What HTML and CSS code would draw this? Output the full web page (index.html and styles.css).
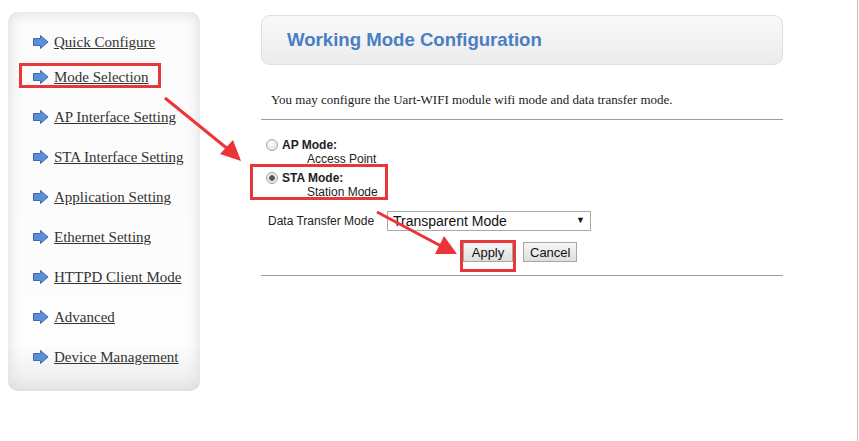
FILE: index.html
```html
<!DOCTYPE html>
<html lang="en">
<head>
    <meta charset="UTF-8">
    <title>Working Mode Configuration</title>
    <link rel="stylesheet" href="styles.css">
</head>
<body>

<div class="page">
    <div class="sidebar">
        <ul class="menu">
            <li><span class="ico"><svg width="16" height="14" viewBox="0 0 16 14"><polygon points="0.5,3.5 7.5,3.5 7.5,0.5 15,7 7.5,13.5 7.5,10.5 0.5,10.5" fill="#5b8edb" stroke="#3f68ad" stroke-width="1"/></svg></span><a href="#">Quick Configure</a></li>
            <li class="marked"><span class="ico"><svg width="16" height="14" viewBox="0 0 16 14"><polygon points="0.5,3.5 7.5,3.5 7.5,0.5 15,7 7.5,13.5 7.5,10.5 0.5,10.5" fill="#5b8edb" stroke="#3f68ad" stroke-width="1"/></svg></span><a href="#">Mode Selection</a></li>
            <li><span class="ico"><svg width="16" height="14" viewBox="0 0 16 14"><polygon points="0.5,3.5 7.5,3.5 7.5,0.5 15,7 7.5,13.5 7.5,10.5 0.5,10.5" fill="#5b8edb" stroke="#3f68ad" stroke-width="1"/></svg></span><a href="#">AP Interface Setting</a></li>
            <li><span class="ico"><svg width="16" height="14" viewBox="0 0 16 14"><polygon points="0.5,3.5 7.5,3.5 7.5,0.5 15,7 7.5,13.5 7.5,10.5 0.5,10.5" fill="#5b8edb" stroke="#3f68ad" stroke-width="1"/></svg></span><a href="#">STA Interface Setting</a></li>
            <li><span class="ico"><svg width="16" height="14" viewBox="0 0 16 14"><polygon points="0.5,3.5 7.5,3.5 7.5,0.5 15,7 7.5,13.5 7.5,10.5 0.5,10.5" fill="#5b8edb" stroke="#3f68ad" stroke-width="1"/></svg></span><a href="#">Application Setting</a></li>
            <li><span class="ico"><svg width="16" height="14" viewBox="0 0 16 14"><polygon points="0.5,3.5 7.5,3.5 7.5,0.5 15,7 7.5,13.5 7.5,10.5 0.5,10.5" fill="#5b8edb" stroke="#3f68ad" stroke-width="1"/></svg></span><a href="#">Ethernet Setting</a></li>
            <li><span class="ico"><svg width="16" height="14" viewBox="0 0 16 14"><polygon points="0.5,3.5 7.5,3.5 7.5,0.5 15,7 7.5,13.5 7.5,10.5 0.5,10.5" fill="#5b8edb" stroke="#3f68ad" stroke-width="1"/></svg></span><a href="#">HTTPD Client Mode</a></li>
            <li><span class="ico"><svg width="16" height="14" viewBox="0 0 16 14"><polygon points="0.5,3.5 7.5,3.5 7.5,0.5 15,7 7.5,13.5 7.5,10.5 0.5,10.5" fill="#5b8edb" stroke="#3f68ad" stroke-width="1"/></svg></span><a href="#">Advanced</a></li>
            <li><span class="ico"><svg width="16" height="14" viewBox="0 0 16 14"><polygon points="0.5,3.5 7.5,3.5 7.5,0.5 15,7 7.5,13.5 7.5,10.5 0.5,10.5" fill="#5b8edb" stroke="#3f68ad" stroke-width="1"/></svg></span><a href="#">Device Management</a></li>
        </ul>
    </div>

    <div class="main">
        <div class="title-box">
            <h1>Working Mode Configuration</h1>
        </div>

        <p class="desc">You may configure the Uart-WIFI module wifi mode and data transfer mode.</p>
        <hr>

        <form class="mode-form">
            <label class="mode">
                <input type="radio" name="mode" value="ap">
                <span class="mode-text"><b>AP Mode:</b><span class="sub">Access Point</span></span>
            </label>
            <label class="mode marked">
                <input type="radio" name="mode" value="sta" checked>
                <span class="mode-text"><b>STA Mode:</b><span class="sub">Station Mode</span></span>
            </label>

            <div class="transfer">
                <span class="transfer-label">Data Transfer Mode</span>
                <div class="select-wrap">
                    <select>
                        <option>Transparent Mode</option>
                        <option>Protocol Mode</option>
                    </select>
                    <span class="caret">&#9660;</span>
                </div>
            </div>

            <div class="buttons">
                <span class="marked btn-mark"><button type="button">Apply</button></span>
                <button type="button">Cancel</button>
            </div>
        </form>
        <hr>
    </div>

    <svg class="arrows" width="859" height="441" viewBox="0 0 859 441">
        <line x1="165" y1="98" x2="229" y2="150" stroke="#ee3338" stroke-width="3"/>
        <polygon points="241,161 220,154 233,140" fill="#ee3338"/>
        <line x1="377" y1="212" x2="441" y2="246" stroke="#ee3338" stroke-width="3"/>
        <polygon points="457,254 435,254 444,236" fill="#ee3338"/>
    </svg>
</div>

</body>
</html>
```

FILE: styles.css
```css
body {
    margin: 0;
    background-color: #fff;
    color: #333;
}

.page {
    position: relative;
    display: flex;
    align-items: flex-start;
    width: 857px;
    height: 441px;
    border-right: 1px solid #bdbdbd;
}

/* left menu */
.sidebar {
    margin: 12px 0 0 8px;
    width: 192px;
    height: 379px;
    border-radius: 10px;
    background: linear-gradient(to bottom, #fbfbfb 0%, #fdfdfd 88%, #e9e9e9 100%);
    box-shadow: inset 0 0 14px #d9d9d9;
    box-sizing: border-box;
}

.menu {
    list-style: none;
    margin: 0;
    padding: 21px 0 0 25px;
}

.menu li {
    position: relative;
    display: flex;
    align-items: center;
    height: 18px;
    margin-bottom: 22px;
    font-family: "Liberation Serif", serif;
    font-size: 15px;
}

.menu li:first-child {
    margin-bottom: 17px;
}

.menu .ico {
    display: flex;
    width: 21px;
}

.menu a {
    color: #333;
    text-decoration: underline;
}

.marked {
    position: relative;
}

.menu li.marked::after {
    content: "";
    position: absolute;
    left: -14px;
    top: -5px;
    width: 136px;
    height: 19px;
    border: 3px solid #e8373b;
}

/* main panel */
.main {
    margin-left: 61px;
    width: 522px;
    font-family: "Liberation Sans", Arial, sans-serif;
}

.title-box {
    margin-top: 15px;
    height: 48px;
    border: 1px solid #dedede;
    border-radius: 9px;
    background: linear-gradient(to bottom, #f9f9f9, #ececec);
    display: flex;
    align-items: center;
    padding-left: 25px;
}

.title-box h1 {
    margin: 0;
    font-size: 18.6px;
    color: #4a7ec4;
}

.desc {
    margin: 27px 0 0 10px;
    font-family: "Liberation Serif", serif;
    font-size: 13px;
    color: #222;
}

hr {
    margin: 11px 0 0 0;
    border: none;
    border-top: 1px solid #9d9d9d;
}

.mode-form {
    padding: 18px 0 0 5px;
}

.mode {
    display: flex;
    align-items: flex-start;
    font-size: 12px;
    line-height: 14px;
    color: #222;
    margin-bottom: 5px;
}

.mode input {
    appearance: none;
    flex: none;
    width: 12px;
    height: 12px;
    margin: 1px 4px 0 0;
    border: 1px solid #a5a5a5;
    border-radius: 50%;
    background: radial-gradient(circle at 40% 35%, #fff, #dcdcdc);
    box-sizing: border-box;
}

.mode input:checked {
    background: radial-gradient(circle, #555 0 2.5px, #e0e0e0 3px, #f6f6f6 6px);
}

.mode-text {
    display: flex;
    flex-direction: column;
}

.mode-text b,
.mode-text .sub {
    display: block;
    height: 14px;
}

.mode-text .sub {
    padding-left: 25px;
}

.mode.marked::after {
    content: "";
    position: absolute;
    left: -16px;
    top: -7px;
    width: 132px;
    height: 30px;
    border: 3px solid #e8373b;
}

.transfer {
    display: flex;
    align-items: center;
    margin-top: 12px;
    margin-left: 2px;
}

.transfer-label {
    font-size: 12px;
    color: #222;
    width: 119px;
}

.select-wrap {
    position: relative;
}

.select-wrap select {
    appearance: none;
    width: 204px;
    height: 20px;
    padding: 0 0 0 5px;
    border: 1px solid #a9a9a9;
    background: #fff;
    font-family: "Liberation Sans", Arial, sans-serif;
    font-size: 14px;
    color: #111;
}

.caret {
    position: absolute;
    right: 6px;
    top: 4px;
    font-size: 9px;
    color: #111;
}

.buttons {
    display: flex;
    gap: 10px;
    margin: 11px 0 0 197px;
    padding-bottom: 2px;
}

.buttons button {
    height: 20px;
    padding: 0 6px;
    border: 1px solid #a6a6a6;
    background: linear-gradient(to bottom, #f7f7f7, #dedede);
    font-family: "Liberation Sans", Arial, sans-serif;
    font-size: 13px;
    color: #111;
}

.btn-mark button {
    width: 50px;
}

.btn-mark::after {
    content: "";
    position: absolute;
    left: -3px;
    top: -2px;
    width: 50px;
    height: 26px;
    border: 3px solid #e8373b;
}

.arrows {
    position: absolute;
    left: 0;
    top: 0;
    pointer-events: none;
}
```
